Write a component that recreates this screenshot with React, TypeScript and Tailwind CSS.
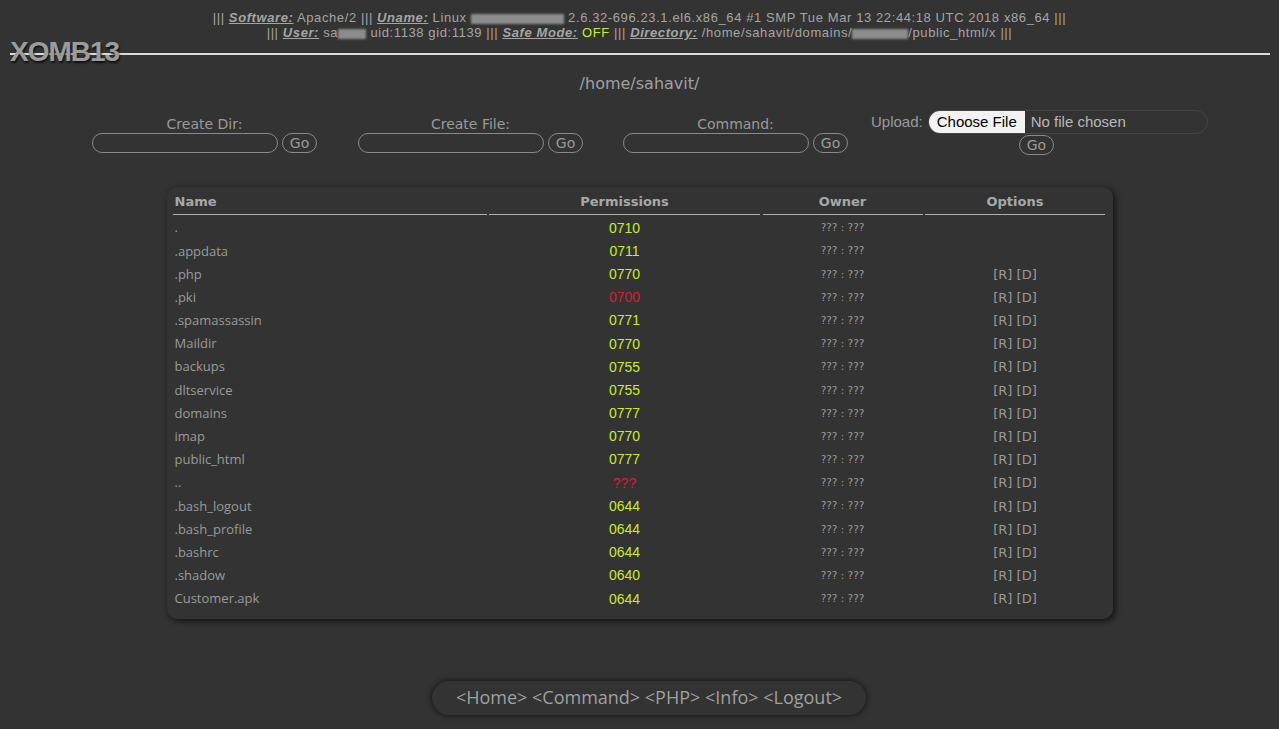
import { ReactElement } from "react";

type Row = { name: string; perm: string; ok: boolean; opts: boolean };

const rows: Row[] = [
  { name: ".", perm: "0710", ok: true, opts: false },
  { name: ".appdata", perm: "0711", ok: true, opts: false },
  { name: ".php", perm: "0770", ok: true, opts: true },
  { name: ".pki", perm: "0700", ok: false, opts: true },
  { name: ".spamassassin", perm: "0771", ok: true, opts: true },
  { name: "Maildir", perm: "0770", ok: true, opts: true },
  { name: "backups", perm: "0755", ok: true, opts: true },
  { name: "dltservice", perm: "0755", ok: true, opts: true },
  { name: "domains", perm: "0777", ok: true, opts: true },
  { name: "imap", perm: "0770", ok: true, opts: true },
  { name: "public_html", perm: "0777", ok: true, opts: true },
  { name: "..", perm: "???", ok: false, opts: true },
  { name: ".bash_logout", perm: "0644", ok: true, opts: true },
  { name: ".bash_profile", perm: "0644", ok: true, opts: true },
  { name: ".bashrc", perm: "0644", ok: true, opts: true },
  { name: ".shadow", perm: "0640", ok: true, opts: true },
  { name: "Customer.apk", perm: "0644", ok: true, opts: true },
];

const Label = ({ children }: { children: string }): ReactElement => (
  <span className="font-bold italic underline">{children}</span>
);

const Blur = ({ w }: { w: string }): ReactElement => (
  <span className={`inline-block ${w} h-[10px] bg-[#8c8c8c] blur-[1px] align-middle`} />
);

const Field = ({ label }: { label: string }): ReactElement => (
  <div className="flex flex-col items-center">
    <span className="text-[14px] leading-[17px] text-[#9a9a9a]">{label}</span>
    <div className="flex items-center gap-[4px]">
      <input className="w-[186px] h-[20px] rounded-full border border-[#8a8a8a] bg-transparent" />
      <button className="w-[35px] h-[20px] rounded-full border border-[#8a8a8a] text-[14px] leading-[18px] text-[#9a9a9a]">
        Go
      </button>
    </div>
  </div>
);

const App = (): ReactElement => {
  return (
    <div className="min-h-[729px] bg-[#333333] text-[#9a9a9a] font-['DejaVu_Sans',sans-serif]">
      <header className="pt-[10px]">
        <div className="text-center text-[13px] leading-[15px] tracking-[0.6px] text-[#a5a5a5] font-['Liberation_Sans',sans-serif]">
          <p>
            ||| <Label>Software:</Label> Apache/2 ||| <Label>Uname:</Label> Linux <Blur w="w-[93px]" />{" "}
            2.6.32-696.23.1.el6.x86_64 #1 SMP Tue Mar 13 22:44:18 UTC 2018 x86_64 |||
          </p>
          <p>
            ||| <Label>User:</Label> sa<Blur w="w-[28px]" /> uid:1138 gid:1139 ||| <Label>Safe Mode:</Label>{" "}
            <span className="text-[#c8ec2a]">OFF</span> ||| <Label>Directory:</Label>{" "}
            /home/sahavit/domains/<Blur w="w-[56px]" />/public_html/x |||
          </p>
        </div>
        <div className="relative h-[34px]">
          <hr className="absolute left-[10px] right-[9px] top-[13px] border-t-2 border-[#dcdcdc]" />
          <h1 className="absolute left-[10px] top-0 text-[28px] leading-[24px] font-bold tracking-[-1px] text-[#9c9c9c] font-['Liberation_Sans',sans-serif] [text-shadow:1px_2px_2px_#111]">
            XOMB13
          </h1>
        </div>
      </header>

      <p className="text-center text-[16px] leading-[20px] text-[#a0a0a0]">/home/sahavit/</p>

      <div className="mt-[22px] flex items-start pl-[92px]">
        <Field label="Create Dir:" />
        <div className="ml-[41px]">
          <Field label="Create File:" />
        </div>
        <div className="ml-[40px]">
          <Field label="Command:" />
        </div>
        <div className="ml-[23px] flex flex-col items-center">
          <div className="flex items-center gap-[5px] mt-[-6px]">
            <span className="text-[15px] text-[#9a9a9a] font-['Liberation_Sans',sans-serif]">Upload:</span>
            <input
              type="file"
              className="w-[280px] h-[24px] rounded-full border border-[#444] text-[15px] text-[#b8b8b8] font-['Liberation_Sans',sans-serif] file:mr-[6px] file:h-[22px] file:rounded-l-[6px] file:border-0 file:bg-[#f2f2f2] file:px-[8px] file:text-[15px] file:text-black"
            />
          </div>
          <button className="mt-[1px] ml-[-6px] w-[35px] h-[20px] rounded-full border border-[#8a8a8a] text-[14px] leading-[18px] text-[#9a9a9a]">
            Go
          </button>
        </div>
      </div>

      <div className="mx-auto mt-[32px] w-[946px] rounded-[10px] bg-[#333333] px-[6px] pt-[6px] pb-[8px] shadow-[2px_2px_6px_#111]">
        <div className="grid grid-cols-[314px_271px_160px_180px] gap-x-[2.5px] text-[13px] font-bold text-[#a8a8a8]">
          <div className="h-[22px] border-b border-[#b0b0b0] pl-[2px] leading-[18px]">Name</div>
          <div className="h-[22px] border-b border-[#b0b0b0] text-center leading-[18px]">Permissions</div>
          <div className="h-[22px] border-b border-[#b0b0b0] text-center leading-[18px]">Owner</div>
          <div className="h-[22px] border-b border-[#b0b0b0] text-center leading-[18px]">Options</div>
        </div>
        <div className="pt-[1.5px]">
          {rows.map((r) => (
            <div
              key={r.name}
              className="grid h-[23.2px] grid-cols-[314px_271px_160px_180px] items-center gap-x-[2.5px]"
            >
              <span className="pl-[2px] text-[13px] text-[#9a9a9a] font-['Open_Sans',sans-serif]">{r.name}</span>
              <span
                className={`text-center text-[14px] font-['Liberation_Sans',sans-serif] ${
                  r.ok ? "text-[#c8ec2a]" : "text-[#d2203c]"
                }`}
              >
                {r.perm}
              </span>
              <span className="text-center text-[10.5px] text-[#9a9a9a]">??? : ???</span>
              <span className="text-center text-[13px] text-[#9a9a9a]">{r.opts ? "[R] [D]" : ""}</span>
            </div>
          ))}
        </div>
      </div>

      <nav className="ml-[432px] mt-[62px] flex h-[34px] w-[434px] items-center justify-center rounded-full bg-[#333333] text-[18px] text-[#a0a0a0] font-['Open_Sans',sans-serif] shadow-[0_0_6px_#111]">
        &lt;Home&gt; &lt;Command&gt; &lt;PHP&gt; &lt;Info&gt; &lt;Logout&gt;
      </nav>
    </div>
  );
};

export default App;
